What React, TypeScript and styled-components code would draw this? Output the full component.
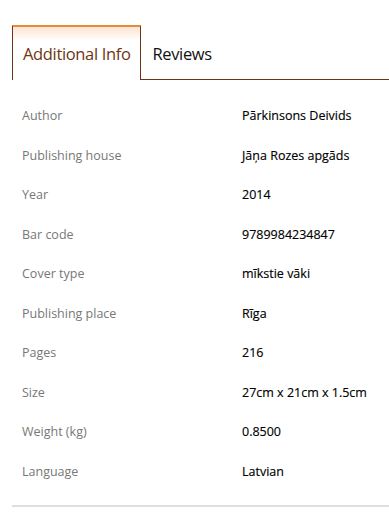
import React, { useState } from "react";
import styled, { createGlobalStyle } from "styled-components";

const GlobalStyle = createGlobalStyle`
  html, body {
    margin: 0;
    padding: 0;
    background: #fff;
  }
  body {
    font-family: "Open Sans", "Noto Sans", Arial, sans-serif;
  }
`;

const Wrapper = styled.div`
  width: 389px;
  padding: 25px 0 0 12px;
  box-sizing: border-box;
`;

const TabBar = styled.div`
  display: flex;
  align-items: stretch;
  height: 55px;
`;

const Tab = styled.button<{ $active?: boolean }>`
  display: flex;
  align-items: center;
  padding: 0 10px;
  border: none;
  font-family: inherit;
  font-size: 16.5px;
  letter-spacing: -0.35px;
  cursor: pointer;
  box-sizing: border-box;
  color: ${({ $active }) => ($active ? "#6f3412" : "#111")};
  background: ${({ $active }) =>
    $active ? "linear-gradient(#fbe4d2 0, #fff 14px)" : "transparent"};
  border-top: ${({ $active }) => ($active ? "2px solid #e68a3e" : "none")};
  border-left: ${({ $active }) => ($active ? "1px solid #6f3412" : "none")};
  border-right: ${({ $active }) => ($active ? "1px solid #6f3412" : "none")};
  border-bottom: ${({ $active }) => ($active ? "none" : "1px solid #6f3412")};
  padding-top: ${({ $active }) => ($active ? "0" : "2px")};
  padding-left: ${({ $active }) => ($active ? "10px" : "11px")};
`;

const Filler = styled.div`
  flex: 1;
  border-bottom: 1px solid #6f3412;
`;

const Table = styled.div`
  display: grid;
  grid-template-columns: 220px 1fr;
  padding: 16px 0 14px;
  border-bottom: 2px solid #dedede;
`;

const Label = styled.div`
  height: 39.5px;
  display: flex;
  align-items: center;
  padding-left: 10px;
  font-size: 12.5px;
  color: #777;
`;

const Value = styled(Label)`
  color: #000;
  -webkit-text-stroke: 0.15px #000;
`;

const rows: [string, string][] = [
  ["Author", "Pārkinsons Deivids"],
  ["Publishing house", "Jāņa Rozes apgāds"],
  ["Year", "2014"],
  ["Bar code", "9789984234847"],
  ["Cover type", "mīkstie vāki"],
  ["Publishing place", "Rīga"],
  ["Pages", "216"],
  ["Size", "27cm x 21cm x 1.5cm"],
  ["Weight (kg)", "0.8500"],
  ["Language", "Latvian"],
];

export default function App() {
  const [tab, setTab] = useState("info");
  return (
    <Wrapper>
      <GlobalStyle />
      <TabBar>
        <Tab $active={tab === "info"} onClick={() => setTab("info")}>
          Additional Info
        </Tab>
        <Tab $active={tab === "reviews"} onClick={() => setTab("reviews")}>
          Reviews
        </Tab>
        <Filler />
      </TabBar>
      <Table>
        {rows.map(([k, v]) => (
          <React.Fragment key={k}>
            <Label>{k}</Label>
            <Value>{v}</Value>
          </React.Fragment>
        ))}
      </Table>
    </Wrapper>
  );
}
